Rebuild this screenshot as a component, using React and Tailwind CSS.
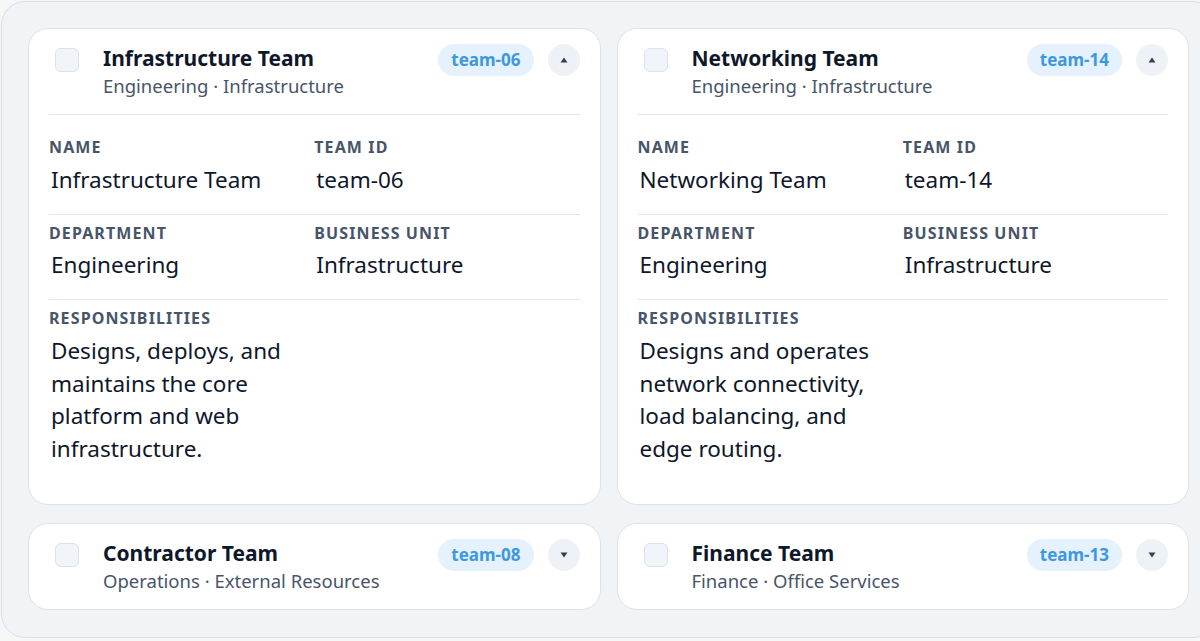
import React from "react";

const teams = [
  {
    id: "team-06",
    name: "Infrastructure Team",
    department: "Engineering",
    unit: "Infrastructure",
    responsibilities:
      "Designs, deploys, and maintains the core platform and web infrastructure.",
    open: true,
  },
  {
    id: "team-14",
    name: "Networking Team",
    department: "Engineering",
    unit: "Infrastructure",
    responsibilities:
      "Designs and operates network connectivity, load balancing, and edge routing.",
    open: true,
  },
  {
    id: "team-08",
    name: "Contractor Team",
    department: "Operations",
    unit: "External Resources",
    open: false,
  },
  {
    id: "team-13",
    name: "Finance Team",
    department: "Finance",
    unit: "Office Services",
    open: false,
  },
];

const Field = ({ label, value }) => (
  <div className="pt-2 pb-[18px]">
    <div className="text-[16px] leading-5 font-bold uppercase tracking-[0.07em] text-[#475569]">
      {label}
    </div>
    <div className="mt-[6.5px] pl-[2px] text-[22.5px] leading-8 text-[#0f172a]">
      {value}
    </div>
  </div>
);

const TeamCard = ({ team }) => (
  <div className="bg-white rounded-[20px] border border-[#dde3ea] px-5">
    <div className="flex items-start pl-[6px] pt-[15px] pb-[16px]">
      <div className="mt-[4px] w-6 h-6 rounded-md border border-[#dbe2ea] bg-[#f1f5f9] shrink-0" />
      <div className="ml-6 flex-1">
        <div className="text-[21px] leading-7 font-bold text-[#0f172a]">
          {team.name}
        </div>
        <div className="mt-[2px] text-[18.5px] leading-6 text-[#475569]">
          {team.department} · {team.unit}
        </div>
      </div>
      <span className="h-8 px-[13px] flex items-center rounded-full bg-[#e5f1fc] text-[#3d98e0] text-[17px] font-bold">
        {team.id}
      </span>
      <button className="ml-[14px] w-8 h-8 rounded-full bg-[#eef2f6] flex items-center justify-center">
        <svg width="8" height="6" viewBox="0 0 8 6">
          {team.open ? (
            <path d="M4 0.5 L7.5 5.5 H0.5 Z" fill="#334155" />
          ) : (
            <path d="M0.5 0.5 H7.5 L4 5.5 Z" fill="#334155" />
          )}
        </svg>
      </button>
    </div>
    {team.open && (
      <div className="border-t border-[#e2e8f0] pt-[14px] pb-[21px]">
        <div className="grid grid-cols-2 border-b border-[#e2e8f0]">
          <Field label="Name" value={team.name} />
          <Field label="Team ID" value={team.id} />
        </div>
        <div className="grid grid-cols-2 border-b border-[#e2e8f0]">
          <Field label="Department" value={team.department} />
          <Field label="Business Unit" value={team.unit} />
        </div>
        <div className="grid grid-cols-2">
          <div className="pt-2 pb-[18px]">
            <div className="text-[16px] leading-5 font-bold uppercase tracking-[0.07em] text-[#475569]">
              Responsibilities
            </div>
            <div className="mt-[7px] pl-[2px] pr-4 text-[22.5px] leading-[32.5px] text-[#0f172a]">
              {team.responsibilities}
            </div>
          </div>
        </div>
      </div>
    )}
  </div>
);

export default function App() {
  return (
    <div
      className="w-[1200px] h-[641px] overflow-hidden bg-[#f6f8f7] pt-px pl-px"
      style={{ fontFamily: '"Noto Sans", sans-serif' }}
    >
      <div className="w-[1216px] bg-[#f0f4f7] border border-[#d9e0e6] rounded-[24px] pl-[26px] pr-[27px] pt-[26px] pb-[27px]">
        <div className="grid grid-cols-2 gap-x-4 gap-y-[18px] items-start">
          {teams.map((t) => (
            <TeamCard key={t.id} team={t} />
          ))}
        </div>
      </div>
    </div>
  );
}
